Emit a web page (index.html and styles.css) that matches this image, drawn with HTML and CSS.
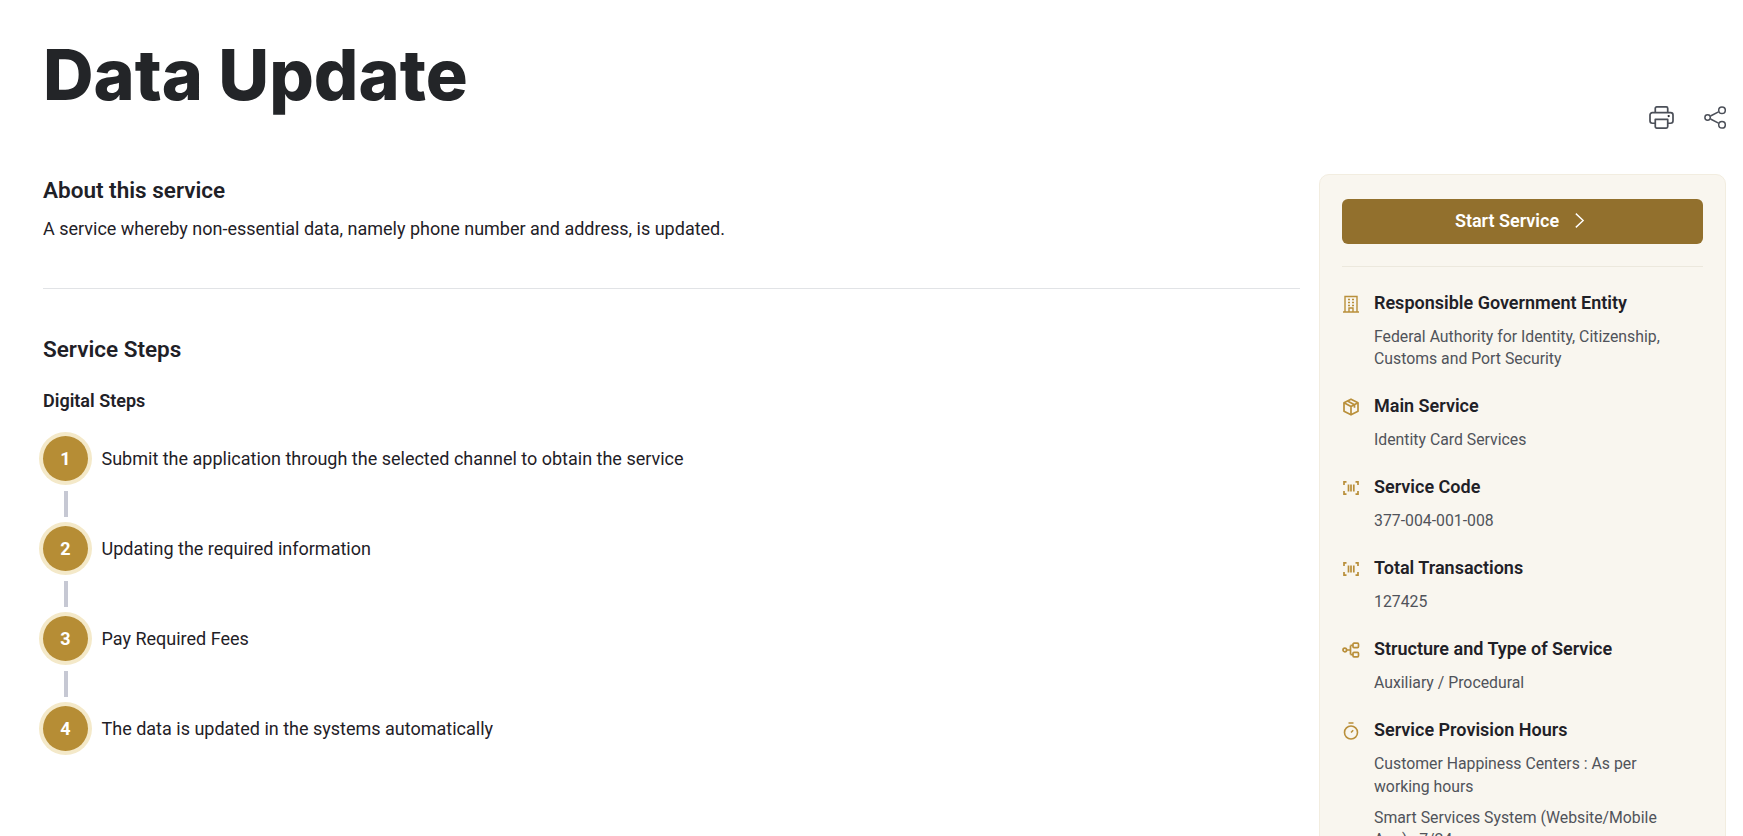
FILE: index.html
```html
<!DOCTYPE html>
<html lang="en">
<head>
    <meta charset="UTF-8">
    <meta name="viewport" content="width=device-width, initial-scale=1.0">
    <title>Data Update</title>
    <link rel="stylesheet" href="styles.css">
</head>
<body>
    <div class="page">
        <div class="title-row">
            <h1>Data Update</h1>
            <div class="actions">
                <svg class="print-icon" viewBox="0 0 26 24" fill="none" stroke="#4b4f58" stroke-width="1.8" stroke-linejoin="round">
                    <path d="M6.5 7V2.5A1.5 1.5 0 0 1 8 1h10a1.5 1.5 0 0 1 1.5 1.5V7"/>
                    <path d="M6.5 18h-3A2.5 2.5 0 0 1 1 15.5v-6A2.5 2.5 0 0 1 3.5 7h19A2.5 2.5 0 0 1 25 9.5v6a2.5 2.5 0 0 1-2.5 2.5h-3"/>
                    <path d="M6.5 14h13v7.5a1.5 1.5 0 0 1-1.5 1.5H8a1.5 1.5 0 0 1-1.5-1.5z"/>
                    <circle cx="20.5" cy="10.5" r="1.2" fill="#26282e" stroke="none"/>
                </svg>
                <svg class="share-icon" viewBox="0 0 22 23" fill="none" stroke="#4b4f58" stroke-width="1.5">
                    <circle cx="3.6" cy="11.5" r="2.7"/>
                    <circle cx="18" cy="4.2" r="3.3"/>
                    <circle cx="18" cy="18.8" r="3.3"/>
                    <path d="M6.5 10l8-4.2M6.5 13l8 4.2"/>
                </svg>
            </div>
        </div>
        <div class="columns">
            <main class="main-col">
                <section class="about">
                    <h2>About this service</h2>
                    <p>A service whereby non-essential data, namely phone number and address, is updated.</p>
                </section>
                <section class="steps">
                    <h2>Service Steps</h2>
                    <h3>Digital Steps</h3>
                    <ol class="step-list">
                        <li class="step"><span class="step-num">1</span><span>Submit the application through the selected channel to obtain the service</span></li>
                        <li class="step"><span class="step-num">2</span><span>Updating the required information</span></li>
                        <li class="step"><span class="step-num">3</span><span>Pay Required Fees</span></li>
                        <li class="step"><span class="step-num">4</span><span>The data is updated in the systems automatically</span></li>
                    </ol>
                </section>
            </main>
            <aside class="card">
                <button class="start-btn">Start Service
                    <svg class="chevron" viewBox="0 0 12 18" fill="none" stroke="#fff" stroke-width="1.5"><path d="M2 1.5L10 9l-8 7.5"/></svg>
                </button>
                <div class="info-list">
                    <div class="info">
                        <svg class="info-icon" viewBox="0 0 18 18" fill="none" stroke="#b98f3a" stroke-width="1.4">
                            <path d="M1 17h16M3 17V1.5h12V17M7 17v-4h4v4"/>
                            <path d="M6 4.5h2M10 4.5h2M6 7.5h2M10 7.5h2M6 10.5h2M10 10.5h2"/>
                        </svg>
                        <div class="info-text">
                            <h4>Responsible Government Entity</h4>
                            <p>Federal Authority for Identity, Citizenship, Customs and Port Security</p>
                        </div>
                    </div>
                    <div class="info">
                        <svg class="info-icon" viewBox="0 0 18 18" fill="none" stroke="#b98f3a" stroke-width="1.7" stroke-linejoin="round">
                            <path d="M9 1.2l7 3.6v8.4l-7 3.6-7-3.6V4.8z"/>
                            <path d="M2 4.8l7 3.7 7-3.7M9 8.5v8.3M5.5 3l7 3.7v3"/>
                        </svg>
                        <div class="info-text">
                            <h4>Main Service</h4>
                            <p>Identity Card Services</p>
                        </div>
                    </div>
                    <div class="info">
                        <svg class="info-icon" viewBox="0 0 18 18" fill="none" stroke="#b98f3a" stroke-width="1.7">
                            <path d="M2 6V2.8h2.5M13.5 2.8H16V6M16 12v3.2h-2.5M4.5 15.2H2V12"/>
                            <path d="M6.5 5.500v7M9 5.500v7M11.800 5.500v7"/>
                        </svg>
                        <div class="info-text">
                            <h4>Service Code</h4>
                            <p>377-004-001-008</p>
                        </div>
                    </div>
                    <div class="info">
                        <svg class="info-icon" viewBox="0 0 18 18" fill="none" stroke="#b98f3a" stroke-width="1.7">
                            <path d="M2 6V2.8h2.5M13.5 2.8H16V6M16 12v3.2h-2.5M4.5 15.2H2V12"/>
                            <path d="M6.5 5.500v7M9 5.500v7M11.800 5.500v7"/>
                        </svg>
                        <div class="info-text">
                            <h4>Total Transactions</h4>
                            <p>127425</p>
                        </div>
                    </div>
                    <div class="info">
                        <svg class="info-icon" viewBox="0 0 18 18" fill="none" stroke="#b98f3a" stroke-width="1.7">
                            <circle cx="2.8" cy="9" r="1.8"/>
                            <rect x="11" y="2.2" width="5.5" height="4.4" rx="1"/>
                            <rect x="11" y="11.4" width="5.5" height="4.4" rx="1"/>
                            <path d="M4.6 9h3.9M8.5 4.4v9.2M8.5 4.4H11M8.5 13.6H11"/>
                        </svg>
                        <div class="info-text">
                            <h4>Structure and Type of Service</h4>
                            <p>Auxiliary / Procedural</p>
                        </div>
                    </div>
                    <div class="info">
                        <svg class="info-icon" viewBox="0 0 18 18" fill="none" stroke="#b98f3a" stroke-width="1.6">
                            <circle cx="9" cy="10.5" r="6.5"/>
                            <path d="M6.5 1h5M9 10.5l2.200-2.200"/>
                        </svg>
                        <div class="info-text">
                            <h4>Service Provision Hours</h4>
                            <p>Customer Happiness Centers : As per working hours</p>
                            <p>Smart Services System (Website/Mobile App) : 7/24</p>
                        </div>
                    </div>
                </div>
            </aside>
        </div>
    </div>
</body>
</html>
```
FILE: styles.css
```css
* {
    box-sizing: border-box;
}

html, body {
    height: 100%;
    overflow: hidden;
}

body {
    margin: 0;
    background-color: #fff;
    color: #1f2127;
    font-family: Roboto, "Liberation Sans", sans-serif;
    font-size: 18px;
}

.page {
    padding: 0 17px 0 43px;
}

.title-row {
    display: flex;
    justify-content: space-between;
    align-items: flex-end;
    height: 174px;
    padding-bottom: 45px;
}

h1 {
    margin: 0;
    align-self: flex-start;
    padding-top: 30px;
    font-family: Inter, sans-serif;
    font-size: 70px;
    font-weight: 800;
    line-height: 90px;
    color: #232528;
}

.actions {
    display: flex;
    align-items: center;
    gap: 30px;
}

.print-icon {
    width: 25px;
    height: 23px;
}

.share-icon {
    width: 22px;
    height: 23px;
}

.columns {
    display: flex;
    gap: 19px;
    align-items: flex-start;
}

.main-col {
    flex: 1;
}

h2 {
    margin: 0;
    font-size: 22.5px;
    font-weight: 600;
    line-height: 30px;
}

.about {
    padding-top: 1px;
    padding-bottom: 46px;
    border-bottom: 1px solid #e1e3e6;
}

.about p {
    margin: 11px 0 0;
    line-height: 26px;
}

.steps {
    padding-top: 45px;
}

h3 {
    margin: 24px 0 0;
    font-size: 18px;
    font-weight: 600;
    line-height: 26px;
}

.step-list {
    margin: 22px 0 0;
    padding: 0;
    list-style: none;
}

.step {
    display: flex;
    align-items: center;
    gap: 13.5px;
    height: 45px;
    position: relative;
    margin-bottom: 45px;
}

.step:not(:last-child)::after {
    content: "";
    position: absolute;
    left: 21px;
    top: 55px;
    width: 4px;
    height: 26px;
    background-color: #c6c8d3;
}

.step-num {
    display: flex;
    justify-content: center;
    align-items: center;
    flex: none;
    width: 45px;
    height: 45px;
    border-radius: 50%;
    background-color: #b68d35;
    box-shadow: 0 0 0 4px #f4e9c9;
    color: #fff;
    font-weight: 700;
}

.card {
    flex: none;
    width: 407px;
    padding: 24px 22px 0;
    border: 1px solid #f2ede0;
    border-radius: 10px;
    background-color: #f9f6ef;
}

.start-btn {
    display: flex;
    justify-content: center;
    align-items: center;
    gap: 15px;
    width: 100%;
    height: 45px;
    padding: 0 5px 2px 0;
    border: none;
    border-radius: 6px;
    background-color: #92702d;
    color: #fff;
    font-family: Roboto, sans-serif;
    font-size: 18px;
    font-weight: 600;
}

.chevron {
    width: 11px;
    height: 17px;
}

.info-list {
    margin-top: 22px;
    padding-top: 22.5px;
    border-top: 1px solid #ece8dd;
}

.info {
    display: flex;
    gap: 14px;
    margin-bottom: 22.5px;
}

.info-icon {
    flex: none;
    width: 18px;
    height: 18px;
    margin-top: 5px;
}

.info-text {
    padding-right: 16px;
}

.info h4 {
    margin: 0;
    font-size: 18px;
    font-weight: 600;
    line-height: 26px;
}

.info p {
    margin: 10px 0 0;
    color: #50535a;
    font-size: 15.8px;
    line-height: 22.5px;
}

.info p + p {
    margin-top: 8.5px;
}
```
